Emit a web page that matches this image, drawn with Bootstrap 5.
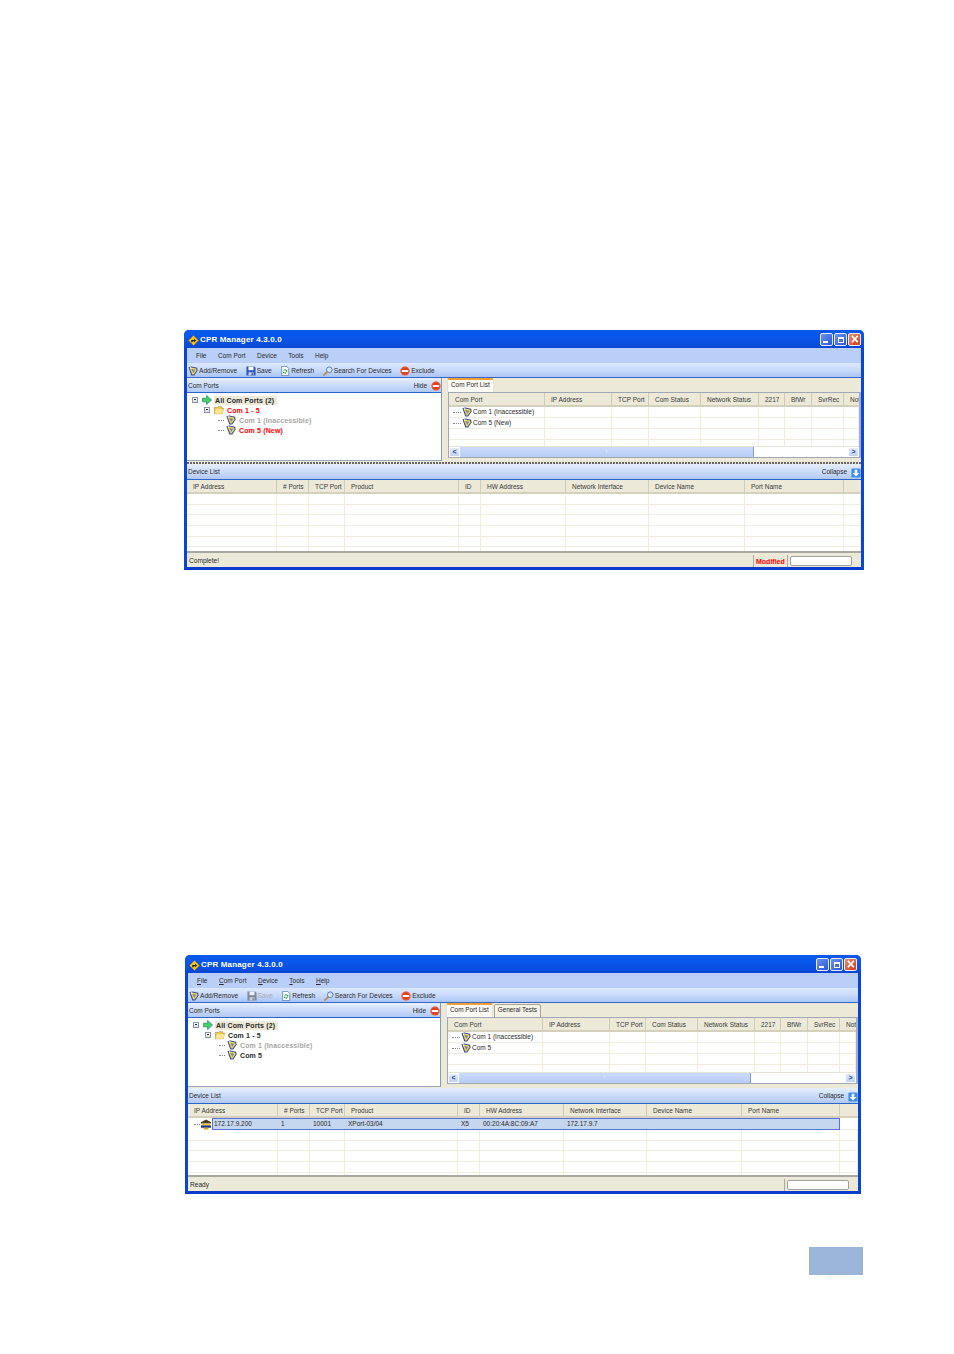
<!DOCTYPE html>
<html lang="en">
<head>
<meta charset="utf-8">
<title>CPR Manager</title>
<link href="https://cdn.jsdelivr.net/npm/bootstrap@5.3.0/dist/css/bootstrap.min.css" rel="stylesheet">
<style>
html,body{background:#fff;margin:0}
.pg{padding-top:330px;height:1354px;overflow:hidden}
.xw{font:6.7px/1 "Liberation Sans",Arial,sans-serif;color:#2a2a2a;background:#ece9d8;filter:blur(.3px);display:flex;flex-direction:column;border-left:3px solid #0b45d8;border-right:3px solid #0b45d8;border-bottom:3px solid #0a3ccb;border-radius:5px 5px 0 0}
.xw1{width:680px;margin-left:184px}
.xw2{width:676px;margin-left:185px;margin-top:385px}
.xtitle{height:18px;margin:0 -3px;padding:2px 3px 0 4px;background:linear-gradient(#0a58e8,#0758ee 30%,#0a50e0 70%,#0b45d4);border-radius:5px 5px 0 0;color:#fff;font-weight:700;font-size:8px;letter-spacing:.16px}
.xw2 .xtitle{padding-right:4px}
.xtitle svg.lg{width:11px;height:11px;margin-right:1px}
.wbs{gap:1px;margin-top:-2px}
.wb{width:13px;height:13px;border:1px solid #e8eefc;border-radius:2px;background:linear-gradient(135deg,#6f93ef,#2a55d8);position:relative;display:block}
.wb-c{background:linear-gradient(135deg,#eb9075,#cf3c16)}
.wb-m::after{content:"";position:absolute;left:3px;top:3px;width:6px;height:6px;border:1px solid #fff;border-top-width:2px}
.wb-n::after{content:"";position:absolute;left:2px;bottom:2px;width:5px;height:2px;background:#fff}
.wb-c::after{content:"\00d7";position:absolute;left:0;right:0;top:-2px;text-align:center;font-size:14px;font-weight:700;color:#fff;letter-spacing:0}
.xmenu{height:15px;background:#b9cff8;padding:1px 0 0 9px;gap:11.5px;font-size:6.5px}
.xmenu .nav-link{padding:0;color:#2a2a2a}
.xtool{height:15px;background:linear-gradient(#dce8fd,#c6d9fb 55%,#a9c5f4);padding:2px 0 0 1px;gap:8.5px;border-bottom:1px solid #3767c8;font-size:6.6px}
.xtool .ti{gap:1px;color:#2a2a2a}
.xtool svg{width:10px;height:10px}
.off{color:#a8aeba!important}
.off svg{filter:grayscale(1);opacity:.6}
.xpanes{height:83px}
.xw2 .xpanes{height:84px}
.xleft{width:255px;flex:none;display:flex;flex-direction:column;margin-right:3px;border-right:1px solid #7f9db9;border-bottom:1px solid #9aa9be}
.xw2 .xleft{width:253px}
.xhead{height:15px;flex:none;background:linear-gradient(#e6effd,#c6d8f8 60%,#b0c9f4);border-bottom:1px solid #2c64c8;padding:2px 0 0 1px;font-size:6.5px}
.xhead svg{width:10px;height:10px}
.xtree{flex:1;background:#fff;padding:2px 0 0 5px;font-weight:700;font-size:7px;letter-spacing:.14px}
.tn{height:10px;gap:2px;white-space:nowrap}
.tn svg{width:10px;height:10px;flex:none}
.tbox{width:6px;height:6px;border:1px solid #8a94a6;background:linear-gradient(#fff,#d8dce4);position:relative;flex:none;margin-right:2px}
.tbox::after{content:"";position:absolute;left:1px;right:1px;top:1px;height:1px;background:#222}
.lv1{padding-left:12px}
.lv2{padding-left:26px}
.tdash{width:6px;border-top:1px dotted #888;flex:none}
.tt{margin-left:1px}
.sel0{background:#ece9d8;padding:1px 3px 1px 1px}
.red{color:#f00}
.grey{color:#a6a6a6}
.xright{flex:1;min-width:0;display:flex;flex-direction:column}
.xtabs{height:14px;padding-left:2px;border:0;gap:1px;flex:none}
.xtabs .nav-link{padding:2px 3px 0;height:13px;font-size:6.4px;color:#2a2a2a;background:#f4f2e8;border:1px solid #a8a690;border-bottom:0;border-radius:2px 2px 0 0;margin:1px 0 0}
.xtabs .nav-link.active{background:#fbfaf5;border-top:2px solid #f0a030;margin-top:0;height:14px;color:#2a2a2a;padding-top:2px}
.xframe{margin:0 0 3px 3px;flex:1;border:1px solid #a0a8b4;border-right:2px solid #9fb0c8;background:#fff;display:flex;flex-direction:column;overflow:hidden;min-height:0}
.xclip{flex:1;min-height:0;overflow:hidden}
.xt{table-layout:fixed;border-collapse:separate;border-spacing:0;margin:0;width:100%;font-size:6.5px;line-height:1;--bs-table-bg:transparent;color:#2a2a2a}
.xt th{height:14px;background:#ece9d8;font-weight:400;padding:2px 0 0 6px;border-right:1px solid #cfccb8;border-bottom:2px solid #d4d0bc;white-space:nowrap;overflow:hidden;color:#3a3a3a;text-align:left;vertical-align:middle;box-shadow:none}
.xt th:last-child{border-right:0}
.xt td{height:10.7px;background:#fff;border:0;border-right:1px solid #f0ede0;border-bottom:1px solid #f0ede0;padding:0 0 0 3px;white-space:nowrap;overflow:visible;vertical-align:middle;box-shadow:none}
.xscroll{height:11px;flex:none;background:#fff;border-top:1px solid #e6e4d8}
.sb{width:11px;height:10px;background:linear-gradient(#e4ecfc,#c0d2f6);border:1px solid #fff;font-size:7px;line-height:8px;text-align:center;color:#20408a;font-weight:700;flex:none}
.sthumb{background:linear-gradient(#cbdafa,#b7ccf6);border-right:1px solid #7f9ddc;color:#fff;text-align:center;line-height:9px;font-size:6px;flex:none}
.w1t{width:294px}.w2t{width:292px}
.rowic{gap:1px}
.rowic svg{width:10px;height:10px;flex:none}
.rowic .tdash{width:8px}
.xsplit{height:3px;border-top:1px solid #ece9d8;background:repeating-linear-gradient(90deg,#666 0 2px,#ece9d8 2px 3px);flex:none}
.xw2 .xsplit{height:1px;border:0;background:#ece9d8}
.xdev{height:89px;display:flex;flex-direction:column}
.xdev .xhead{height:16px;flex:none}
.xdevb{flex:1;background:#fff;overflow:hidden;border-bottom:2px solid #a8a8a0;min-height:0}
.xstat{height:14px;padding:2px 0 0 2px;flex:none;font-size:6.6px;color:#2a2a2a}
.sfield{width:62px;height:10px;background:#fff;border:1px solid #a0a0a0;border-radius:2px;margin:0 9px 0 2px}
.sflag{color:#f00;font-weight:700;border-left:1px solid #b0a8a0;border-right:1px solid #b0a8a0;height:12px;padding:0 2px;font-size:7px;width:35px}
.sep0{border-left:1px solid #a8a8a0;height:12px;width:1px}
.xt .srow td{background:#c5d6ef;border:0;border-top:1px solid #5a6fd8;border-bottom:1px solid #5a6fd8;height:12px}
.xt .srow td.lastc{border-right:1px solid #5a6fd8}
.xt .srow td.nob{background:#fff;border:0;border-bottom:1px solid #f0ede0}
.xt .srow td.firstc{background:#fff;border:0;padding:0}
.firsti{height:12px;padding-left:6px}
.firsti svg{width:12px;height:11px;flex:none}
.firsti .tdash{width:6px}
.firsti b{font-weight:400;flex:1;display:block;background:#c5d6ef;border:1px solid #5a6fd8;border-right:0;height:12px;line-height:10px;padding-left:1px}
.pblock{width:54px;height:28px;margin-left:809px;margin-top:53px;background:#9ab5d9}
.a1{width:96px}.a2{width:67px}.a3{width:37px}.a4{width:52px}.a5{width:58px}.a6{width:26px}.a7{width:27px}.a8{width:32px}
.b1{width:90px}.b2{width:32px}.b3{width:36px}.b4{width:114px}.b5{width:22px}.b6{width:85px}.b7{width:83px}.b8{width:96px}.b9{width:99px}
.c1{width:95px}.c2{width:67px}.c3{width:36px}.c4{width:52px}.c5{width:57px}.c6{width:26px}.c7{width:27px}.c8{width:32px}
.e1{width:90px}.e2{width:32px}.e3{width:35px}.e4{width:113px}.e5{width:22px}.e6{width:84px}.e7{width:83px}.e8{width:95px}.e9{width:98px}
</style>
</head>
<body>
<svg width="0" height="0" class="d-block position-absolute">
<defs>
<symbol id="i-logo" viewBox="0 0 12 12"><path d="M6 .5 11.5 6 6 11.5.5 6z" fill="#f7c21a" stroke="#a86a00" stroke-width=".5"/><path d="M3.5 8V5.500H6.500V4L9 6 6.500 8V6.800H5V8z" fill="#222"/></symbol>
<symbol id="i-com" viewBox="0 0 12 12"><path d="M.5 1.500 4 .5 11 2 11.500 5.500 7.500 11.500 4 11.500z" fill="#3d4a8c"/><path d="M2 2.200 4.200 1.700 9.800 3 10.200 5.400 6.800 10.300 5 10.300z" fill="#e3d569"/><path d="M4 3.500 8.500 4.500 6.300 8.500z" fill="#7f8698"/><circle cx="3" cy="2.500" r=".9" fill="#fff"/></symbol>
<symbol id="i-folder" viewBox="0 0 12 12"><path d="M.5 3H4L5 2H9.500V4H11.500L10 10.500H.5z" fill="#efc956" stroke="#a88a38" stroke-width=".7"/><path d="M2.500 5H11.500L10 10.500H.8z" fill="#fbe692"/></symbol>
<symbol id="i-arrow" viewBox="0 0 12 12"><path d="M.5 3.800H5.500V.5L11.500 6 5.500 11.500V8.200H.5z" fill="#3fd06a" stroke="#1c7a70" stroke-width=".8"/></symbol>
<symbol id="i-save" viewBox="0 0 12 12"><path d="M.5.500H10L11.500 2V11.500H.5z" fill="#2a5bc0"/><path d="M3 .8H9V5H3z" fill="#fff"/><path d="M3 7.500H9V11.200H3z" fill="#c8d4ea"/><path d="M6.700 8H8V11H6.700z" fill="#1d3f8c"/></symbol>
<symbol id="i-refresh" viewBox="0 0 12 12"><path d="M2 .5H8L10.500 3V11.500H2z" fill="#fff" stroke="#3a6ea8" stroke-width=".8"/><path d="M4 5C4.500 3.500 7 3.500 7.800 5L8.800 4.500V7H6.500L7.300 6C7 5 5.500 5 5 5.800zM8 8.200C7.300 9.500 5 9.500 4.300 8.200L3.500 8.700V6.800H5.500L5 7.500C5.500 8.200 6.500 8.200 7 7.500z" fill="#2e9e46"/></symbol>
<symbol id="i-search" viewBox="0 0 12 12"><circle cx="7.500" cy="4.500" r="3.400" fill="#d6e6fb" stroke="#4a78b8" stroke-width="1.100"/><path d="M5 7 1 11" stroke="#b09058" stroke-width="2" stroke-linecap="round"/></symbol>
<symbol id="i-stop" viewBox="0 0 12 12"><circle cx="6" cy="6" r="5.500" fill="#e0401f"/><circle cx="6" cy="6" r="5" fill="none" stroke="#f29077" stroke-width=".6"/><path d="M2.200 4.800H9.800V7.200H2.200z" fill="#fff"/></symbol>
<symbol id="i-down" viewBox="0 0 12 12"><rect x=".5" y=".5" width="11" height="11" rx="1.500" fill="#3f8cf0"/><path d="M4.500 2H7.500V6H10L6 10.200 2 6H4.500z" fill="#fff"/></symbol>
<symbol id="i-dev" viewBox="0 0 13 12"><path d="M1 3.500 6.500.5 12 3.500V5H1z" fill="#4a3a22"/><path d="M2 5H11V7H2z" fill="#f2c832"/><path d="M1 7H12V9.500H1z" fill="#1c2f78"/><path d="M4 9.500H9V11.500H4z" fill="#d8a820"/></symbol>
</defs>
</svg>

<div class="pg">

<div class="xw xw1">
  <div class="xtitle d-flex align-items-center"><svg class="lg"><use href="#i-logo"/></svg><span>CPR Manager 4.3.0.0</span>
    <div class="ms-auto d-flex wbs"><i class="wb wb-n"></i><i class="wb wb-m"></i><i class="wb wb-c"></i></div></div>
  <nav class="nav xmenu align-items-center"><a class="nav-link">File</a><a class="nav-link">Com Port</a><a class="nav-link">Device</a><a class="nav-link">Tools</a><a class="nav-link">Help</a></nav>
  <div class="xtool d-flex align-items-center">
    <span class="ti d-flex align-items-center"><svg><use href="#i-com"/></svg>Add/Remove</span>
    <span class="ti d-flex align-items-center"><svg><use href="#i-save"/></svg>Save</span>
    <span class="ti d-flex align-items-center"><svg><use href="#i-refresh"/></svg>Refresh</span>
    <span class="ti d-flex align-items-center"><svg><use href="#i-search"/></svg>Search For Devices</span>
    <span class="ti d-flex align-items-center"><svg><use href="#i-stop"/></svg>Exclude</span>
  </div>
  <div class="xpanes d-flex">
    <div class="xleft">
      <div class="xhead d-flex align-items-center"><span>Com Ports</span><span class="ms-auto me-1">Hide</span><svg><use href="#i-stop"/></svg></div>
      <div class="xtree">
        <div class="tn d-flex align-items-center"><i class="tbox"></i><svg><use href="#i-arrow"/></svg><span class="sel0">All Com Ports (2)</span></div>
        <div class="tn d-flex align-items-center lv1"><i class="tbox"></i><svg><use href="#i-folder"/></svg><span class="red tt">Com 1 - 5</span></div>
        <div class="tn d-flex align-items-center lv2"><i class="tdash"></i><svg><use href="#i-com"/></svg><span class="grey tt">Com 1 (Inaccessible)</span></div>
        <div class="tn d-flex align-items-center lv2"><i class="tdash"></i><svg><use href="#i-com"/></svg><span class="red tt">Com 5 (New)</span></div>
      </div>
    </div>
    <div class="xright">
      <ul class="nav nav-tabs xtabs"><li class="nav-item"><a class="nav-link active">Com Port List</a></li></ul>
      <div class="xframe">
        <div class="xclip">
        <table class="table xt">
          <colgroup><col class="a1"><col class="a2"><col class="a3"><col class="a4"><col class="a5"><col class="a6"><col class="a7"><col class="a8"><col></colgroup>
          <thead><tr><th>Com Port</th><th>IP Address</th><th>TCP Port</th><th>Com Status</th><th>Network Status</th><th>2217</th><th>BfWr</th><th>SvrRec</th><th>Not</th></tr></thead>
          <tbody>
            <tr><td class="p-0"><div class="rowic d-flex align-items-center ps-1"><i class="tdash"></i><svg><use href="#i-com"/></svg><span>Com 1 (Inaccessible)</span></div></td><td></td><td></td><td></td><td></td><td></td><td></td><td></td><td></td></tr>
            <tr><td class="p-0"><div class="rowic d-flex align-items-center ps-1"><i class="tdash"></i><svg><use href="#i-com"/></svg><span>Com 5 (New)</span></div></td><td></td><td></td><td></td><td></td><td></td><td></td><td></td><td></td></tr>
            <tr><td></td><td></td><td></td><td></td><td></td><td></td><td></td><td></td><td></td></tr>
            <tr><td></td><td></td><td></td><td></td><td></td><td></td><td></td><td></td><td></td></tr>
          </tbody>
        </table>
        </div>
        <div class="xscroll d-flex"><span class="sb">&lt;</span><span class="sthumb w1t">⁞</span><span class="sb ms-auto">&gt;</span></div>
      </div>
    </div>
  </div>
  <div class="xsplit"></div>
  <div class="xdev">
    <div class="xhead d-flex align-items-center"><span>Device List</span><span class="ms-auto me-1">Collapse</span><svg><use href="#i-down"/></svg></div>
    <div class="xdevb">
      <table class="table xt">
        <colgroup><col class="b1"><col class="b2"><col class="b3"><col class="b4"><col class="b5"><col class="b6"><col class="b7"><col class="b8"><col class="b9"><col></colgroup>
        <thead><tr><th>IP Address</th><th># Ports</th><th>TCP Port</th><th>Product</th><th>ID</th><th>HW Address</th><th>Network Interface</th><th>Device Name</th><th>Port Name</th><th></th></tr></thead>
        <tbody>
          <tr><td></td><td></td><td></td><td></td><td></td><td></td><td></td><td></td><td></td><td></td></tr>
          <tr><td></td><td></td><td></td><td></td><td></td><td></td><td></td><td></td><td></td><td></td></tr>
          <tr><td></td><td></td><td></td><td></td><td></td><td></td><td></td><td></td><td></td><td></td></tr>
          <tr><td></td><td></td><td></td><td></td><td></td><td></td><td></td><td></td><td></td><td></td></tr>
          <tr><td></td><td></td><td></td><td></td><td></td><td></td><td></td><td></td><td></td><td></td></tr>
          <tr><td></td><td></td><td></td><td></td><td></td><td></td><td></td><td></td><td></td><td></td></tr>
        </tbody>
      </table>
    </div>
  </div>
  <div class="xstat d-flex align-items-center"><span>Complete!</span><span class="sflag ms-auto d-flex align-items-center">Modified</span><span class="sfield"></span></div>
</div>

<div class="xw xw2">
  <div class="xtitle d-flex align-items-center"><svg class="lg"><use href="#i-logo"/></svg><span>CPR Manager 4.3.0.0</span>
    <div class="ms-auto d-flex wbs"><i class="wb wb-n"></i><i class="wb wb-m"></i><i class="wb wb-c"></i></div></div>
  <nav class="nav xmenu align-items-center"><a class="nav-link"><u>F</u>ile</a><a class="nav-link"><u>C</u>om Port</a><a class="nav-link"><u>D</u>evice</a><a class="nav-link"><u>T</u>ools</a><a class="nav-link"><u>H</u>elp</a></nav>
  <div class="xtool d-flex align-items-center">
    <span class="ti d-flex align-items-center"><svg><use href="#i-com"/></svg>Add/Remove</span>
    <span class="ti d-flex align-items-center off"><svg><use href="#i-save"/></svg>Save</span>
    <span class="ti d-flex align-items-center"><svg><use href="#i-refresh"/></svg>Refresh</span>
    <span class="ti d-flex align-items-center"><svg><use href="#i-search"/></svg>Search For Devices</span>
    <span class="ti d-flex align-items-center"><svg><use href="#i-stop"/></svg>Exclude</span>
  </div>
  <div class="xpanes d-flex">
    <div class="xleft">
      <div class="xhead d-flex align-items-center"><span>Com Ports</span><span class="ms-auto me-1">Hide</span><svg><use href="#i-stop"/></svg></div>
      <div class="xtree">
        <div class="tn d-flex align-items-center"><i class="tbox"></i><svg><use href="#i-arrow"/></svg><span class="sel0">All Com Ports (2)</span></div>
        <div class="tn d-flex align-items-center lv1"><i class="tbox"></i><svg><use href="#i-folder"/></svg><span class="tt">Com 1 - 5</span></div>
        <div class="tn d-flex align-items-center lv2"><i class="tdash"></i><svg><use href="#i-com"/></svg><span class="grey tt">Com 1 (Inaccessible)</span></div>
        <div class="tn d-flex align-items-center lv2"><i class="tdash"></i><svg><use href="#i-com"/></svg><span class="tt">Com 5</span></div>
      </div>
    </div>
    <div class="xright">
      <ul class="nav nav-tabs xtabs"><li class="nav-item"><a class="nav-link active">Com Port List</a></li><li class="nav-item"><a class="nav-link">General Tests</a></li></ul>
      <div class="xframe">
        <div class="xclip">
        <table class="table xt">
          <colgroup><col class="c1"><col class="c2"><col class="c3"><col class="c4"><col class="c5"><col class="c6"><col class="c7"><col class="c8"><col></colgroup>
          <thead><tr><th>Com Port</th><th>IP Address</th><th>TCP Port</th><th>Com Status</th><th>Network Status</th><th>2217</th><th>BfWr</th><th>SvrRec</th><th>Not</th></tr></thead>
          <tbody>
            <tr><td class="p-0"><div class="rowic d-flex align-items-center ps-1"><i class="tdash"></i><svg><use href="#i-com"/></svg><span>Com 1 (Inaccessible)</span></div></td><td></td><td></td><td></td><td></td><td></td><td></td><td></td><td></td></tr>
            <tr><td class="p-0"><div class="rowic d-flex align-items-center ps-1"><i class="tdash"></i><svg><use href="#i-com"/></svg><span>Com 5</span></div></td><td></td><td></td><td></td><td></td><td></td><td></td><td></td><td></td></tr>
            <tr><td></td><td></td><td></td><td></td><td></td><td></td><td></td><td></td><td></td></tr>
            <tr><td></td><td></td><td></td><td></td><td></td><td></td><td></td><td></td><td></td></tr>
          </tbody>
        </table>
        </div>
        <div class="xscroll d-flex"><span class="sb">&lt;</span><span class="sthumb w2t">⁞</span><span class="sb ms-auto">&gt;</span></div>
      </div>
    </div>
  </div>
  <div class="xsplit"></div>
  <div class="xdev">
    <div class="xhead d-flex align-items-center"><span>Device List</span><span class="ms-auto me-1">Collapse</span><svg><use href="#i-down"/></svg></div>
    <div class="xdevb">
      <table class="table xt">
        <colgroup><col class="e1"><col class="e2"><col class="e3"><col class="e4"><col class="e5"><col class="e6"><col class="e7"><col class="e8"><col class="e9"><col></colgroup>
        <thead><tr><th>IP Address</th><th># Ports</th><th>TCP Port</th><th>Product</th><th>ID</th><th>HW Address</th><th>Network Interface</th><th>Device Name</th><th>Port Name</th><th></th></tr></thead>
        <tbody>
          <tr class="srow"><td class="firstc"><div class="firsti d-flex align-items-center"><i class="tdash"></i><svg><use href="#i-dev"/></svg><b>172.17.9.200</b></div></td><td>1</td><td>10001</td><td>XPort-03/04</td><td>X5</td><td>00:20:4A:8C:09:A7</td><td>172.17.9.7</td><td></td><td class="lastc"></td><td class="nob"></td></tr>
          <tr><td></td><td></td><td></td><td></td><td></td><td></td><td></td><td></td><td></td><td></td></tr>
          <tr><td></td><td></td><td></td><td></td><td></td><td></td><td></td><td></td><td></td><td></td></tr>
          <tr><td></td><td></td><td></td><td></td><td></td><td></td><td></td><td></td><td></td><td></td></tr>
          <tr><td></td><td></td><td></td><td></td><td></td><td></td><td></td><td></td><td></td><td></td></tr>
          <tr><td></td><td></td><td></td><td></td><td></td><td></td><td></td><td></td><td></td><td></td></tr>
        </tbody>
      </table>
    </div>
  </div>
  <div class="xstat d-flex align-items-center"><span>Ready</span><span class="sep0 ms-auto"></span><span class="sfield"></span></div>
</div>

<div class="pblock"></div>
</div>
<script src="https://cdn.jsdelivr.net/npm/bootstrap@5.3.0/dist/js/bootstrap.bundle.min.js"></script>
</body>
</html>
